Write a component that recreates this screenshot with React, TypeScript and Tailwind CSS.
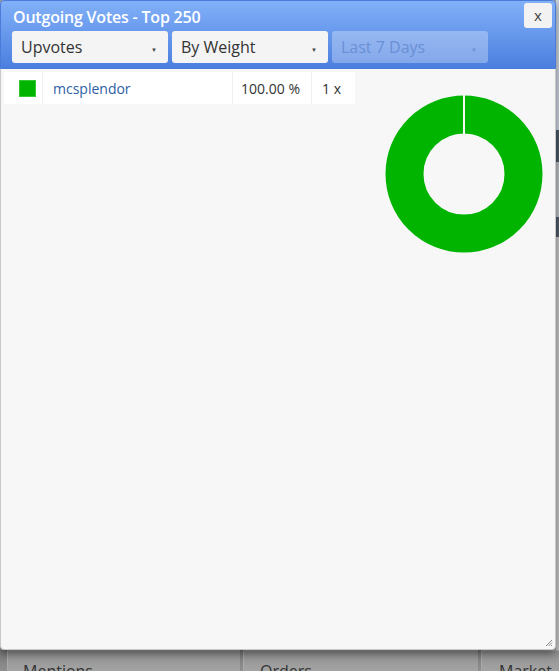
const font = { fontFamily: '"Open Sans", "Liberation Sans", sans-serif' };

function Caret() {
  return <span className="text-[8px] leading-none">▼</span>;
}

function Select({ label, disabled }: { label: string; disabled?: boolean }) {
  return (
    <div
      className={
        'w-[156px] h-[32px] rounded-[3px] flex items-center justify-between pl-[9px] pr-[10px] text-[16px] ' +
        (disabled ? 'bg-white/30 text-[#6b8fd6]' : 'bg-[#f4f4f4] text-[#333]')
      }
    >
      <span>{label}</span>
      <span className={disabled ? 'text-[#6b8fd6] scale-75' : 'text-[#444] scale-75'}>
        <Caret />
      </span>
    </div>
  );
}

function Donut() {
  return (
    <svg width="158" height="158" viewBox="0 0 158 158">
      <circle cx="79" cy="79" r="59.5" fill="none" stroke="#00b400" strokeWidth="38" />
      <line x1="79" y1="0" x2="79" y2="39" stroke="#f7f7f7" strokeWidth="2" />
    </svg>
  );
}

export default function App() {
  return (
    <div className="relative w-[559px] h-[671px] overflow-hidden bg-[#9c9c9c]" style={font}>
      {/* page behind the dialog */}
      <div className="flex flex-col h-full">
        <div className="h-[650px] shrink-0 flex justify-end">
          <div className="w-[3px] flex flex-col">
            <div className="h-[130px] bg-[#c9d2dc]" />
            <div className="h-[32px] bg-[#4b5866]" />
            <div className="h-[55px] bg-[#b8bcc2]" />
            <div className="h-[20px] bg-[#505b68]" />
            <div className="flex-1 bg-[#c4c4c4]" />
          </div>
        </div>
        <div className="h-[40px] shrink-0 flex gap-[3px] pl-[7px] bg-gradient-to-b from-[#7a7a7a] to-[#a2a2a2]">
          <div className="w-[233px] bg-gradient-to-b from-[#939393] to-[#b2b2b2] border-l border-t border-[#aaa] pl-[15px] pt-[12px] text-[16px] text-[#333] leading-none">
            Mentions
          </div>
          <div className="w-[235px] bg-gradient-to-b from-[#939393] to-[#b2b2b2] border-l border-t border-[#aaa] pl-[16px] pt-[12px] text-[16px] text-[#333] leading-none">
            Orders
          </div>
          <div className="flex-1 bg-gradient-to-b from-[#939393] to-[#b2b2b2] border-l border-t border-[#aaa] pl-[17px] pt-[12px] text-[16px] text-[#333] leading-none">
            Market
          </div>
        </div>
      </div>

      {/* dialog */}
      <div className="absolute left-0 top-0 w-[556px] h-[650px] flex flex-col bg-[#f7f7f7] border border-[#c8c8c8] rounded-[4px] shadow-[0_4px_8px_rgba(0,0,0,0.45)]">
        <div className="h-[69px] shrink-0 rounded-t-[4px] bg-gradient-to-b from-[#82b0f8] to-[#4b7fdf] border border-[#4a7bd8] -m-px mb-0 px-[11px]">
          <div className="flex items-start justify-between">
            <div className="text-white text-[16px] font-semibold pt-[4px] pl-[1px] tracking-[-0.2px]">
              Outgoing Votes - Top 250
            </div>
            <button className="mt-[2px] -mr-[8px] w-[28px] h-[25px] rounded-[3px] bg-[#f2f2f2] text-[#444] text-[15px] leading-none flex items-center justify-center">
              x
            </button>
          </div>
          <div className="flex gap-[4px] mt-[2px]">
            <Select label="Upvotes" />
            <Select label="By Weight" />
            <Select label="Last 7 Days" disabled />
          </div>
        </div>

        <div className="relative flex-1 flex items-start px-[3px] pt-[3px]">
          <div className="w-[351px] h-[32px] bg-white flex items-center text-[14px]">
            <div className="w-[39px] h-full flex items-center justify-end pr-[6px] border-r border-[#f0f0f0]">
              <div className="w-[17px] h-[17px] bg-[#00b400] border border-[#34c934]" />
            </div>
            <div className="flex-1 pl-[10px] text-[#2c5ea6]">mcsplendor</div>
            <div className="w-[79px] h-full flex items-center justify-end pr-[11px] border-l border-[#f0f0f0] text-[#333]">
              100.00 %
            </div>
            <div className="w-[44px] h-full flex items-center pl-[10px] border-l border-[#f0f0f0] text-[#333]">
              1 x
            </div>
          </div>
          <div className="ml-auto mr-[9px] mt-[23px]">
            <Donut />
          </div>
          <svg className="absolute right-[2px] bottom-[2px]" width="8" height="8" viewBox="0 0 8 8">
            <path d="M7 1 L1 7 M7 3.5 L3.5 7 M7 6 L6 7" stroke="#888" strokeWidth="1" />
          </svg>
        </div>
      </div>
    </div>
  );
}
